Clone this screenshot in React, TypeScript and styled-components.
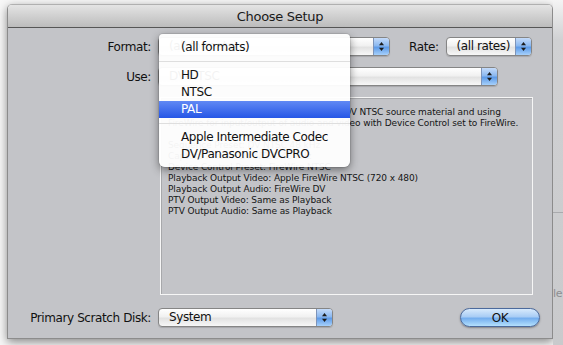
import { createGlobalStyle, styled } from "styled-components";

const GlobalStyle = createGlobalStyle`
  html, body {
    margin: 0;
    padding: 0;
    background: #f7f7f7;
  }
  body {
    font-family: "DejaVu Sans", "Liberation Sans", sans-serif;
    font-size: 12px;
    letter-spacing: -0.4px;
    color: #111;
  }
`;

const Page = styled.div`
  display: flex;
  width: 563px;
  height: 345px;
  padding: 4px 0 0 7px;
  box-sizing: border-box;
  overflow: hidden;
`;

const Window = styled.div`
  width: 546px;
  height: 335px;
  flex-shrink: 0;
  display: flex;
  flex-direction: column;
  border: 1px solid #8c8c8c;
  border-top-color: #b0b0b0;
  border-radius: 5px 5px 0 0;
  box-shadow: 0 3px 10px rgba(0, 0, 0, 0.45);
  box-sizing: border-box;
  overflow: hidden;
`;

const TitleBar = styled.div`
  height: 22px;
  flex-shrink: 0;
  display: flex;
  align-items: center;
  justify-content: center;
  background: linear-gradient(#e4e4e4, #bcbcbc);
  border-bottom: 1px solid #565656;
  font-size: 13px;
  letter-spacing: -0.3px;
  color: #1a1a1a;
`;

const Body = styled.div`
  flex: 1;
  display: flex;
  flex-direction: column;
  padding: 9px 0 0 0;
  background: #c3c4c8;
`;

const Row = styled.div<{ $top?: number }>`
  display: flex;
  align-items: center;
  margin-top: ${(p) => p.$top ?? 0}px;
`;

const FieldLabel = styled.div<{ $width?: number; $gap?: number }>`
  width: ${(p) => (p.$width ? `${p.$width}px` : "auto")};
  margin-left: ${(p) => p.$gap ?? 0}px;
  margin-right: 7px;
  text-align: right;
  white-space: nowrap;
  color: #111;
  flex-shrink: 0;
`;

const PopupWrap = styled.div`
  position: relative;
`;

const Popup = styled.div<{ $width: number }>`
  width: ${(p) => p.$width}px;
  height: 19px;
  flex-shrink: 0;
  display: flex;
  align-items: stretch;
  box-sizing: border-box;
  border: 1px solid #858585;
  border-radius: 4px;
  background: linear-gradient(#ffffff 0%, #f1f1f1 45%, #e2e2e2 55%, #f7f7f7 100%);
  box-shadow: 0 1px 1px rgba(0, 0, 0, 0.15);
  overflow: hidden;
`;

const PopupValue = styled.span`
  flex: 1;
  padding-left: 10px;
  line-height: 17px;
  white-space: nowrap;
`;

const PopupArrows = styled.span`
  width: 15px;
  display: flex;
  align-items: center;
  justify-content: center;
  border-left: 1px solid #7d93b8;
  background: linear-gradient(#c4dbfa 0%, #8bb8f0 45%, #5e9be8 55%, #a6d0fb 100%);
`;

const Arrows = () => (
  <svg width="7" height="11" viewBox="0 0 7 11">
    <path d="M3.5 1 L6 4.2 H1 Z" fill="#1b1b1b" />
    <path d="M3.5 10 L6 6.8 H1 Z" fill="#1b1b1b" />
  </svg>
);

const Menu = styled.div`
  position: absolute;
  top: -3px;
  left: 1px;
  width: 191px;
  padding: 5px 0 4px;
  background: rgba(255, 255, 255, 0.95);
  border-radius: 4px 4px 6px 6px;
  box-shadow: 0 3px 9px rgba(0, 0, 0, 0.45), 0 0 0 1px rgba(0, 0, 0, 0.08);
  z-index: 5;
`;

const MenuItem = styled.div<{ $active?: boolean }>`
  height: 17px;
  line-height: 17px;
  padding-left: 22px;
  color: ${(p) => (p.$active ? "#fff" : "#111")};
  background: ${(p) => (p.$active ? "linear-gradient(#6189f4, #2556e6)" : "transparent")};
  white-space: nowrap;
`;

const MenuSeparator = styled.div`
  height: 11px;
  display: flex;
  align-items: center;
  &::after {
    content: "";
    flex: 1;
    height: 1px;
    background: #dedede;
  }
`;

const DescBox = styled.div`
  margin: 11px 0 0 152px;
  width: 373px;
  height: 198px;
  box-sizing: border-box;
  padding: 9px 0 0 7px;
  border: 1px solid #f6f6f6;
  box-shadow: inset 1px 1px 0 #a7a8ab;
  font-size: 9px;
  line-height: 11px;
  letter-spacing: -0.1px;
  color: #151515;
  white-space: nowrap;
  overflow: hidden;
`;

const OkButton = styled.div`
  margin-left: auto;
  margin-right: 12px;
  width: 80px;
  height: 19px;
  display: flex;
  align-items: center;
  justify-content: center;
  box-sizing: border-box;
  border: 1px solid #4c6a9c;
  border-radius: 10px;
  background: linear-gradient(#d8eafc 0%, #a9cdf5 45%, #74aeee 55%, #b4e0fd 100%);
  box-shadow: 0 1px 2px rgba(0, 0, 0, 0.35);
  color: #111;
`;

const Backdrop = styled.div`
  flex: 1;
  margin-top: -4px;
  display: flex;
  flex-direction: column;
  background: linear-gradient(#f4f4f4 0px, #d0d1d3 40px, #c9cacc 100%);
`;

const BackdropRule = styled.div`
  margin-top: 212px;
  height: 1px;
  background: #a9aaad;
`;

const BackdropText = styled.div`
  margin-top: 74px;
  font-size: 11px;
  color: #8d8e91;
`;

const descLines = [
  "Use this Easy Setup when working with DV NTSC source material and using",
  "FireWire for input/output of audio and video with Device Control set to FireWire.",
  "\u00a0",
  "Sequence Preset: DV NTSC 48 kHz",
  "Capture Preset: DV NTSC 48 kHz",
  "Device Control Preset: FireWire NTSC",
  "Playback Output Video: Apple FireWire NTSC (720 x 480)",
  "Playback Output Audio: FireWire DV",
  "PTV Output Video: Same as Playback",
  "PTV Output Audio: Same as Playback",
];

export default function App() {
  return (
    <>
      <GlobalStyle />
      <Page>
        <Window>
          <TitleBar>Choose Setup</TitleBar>
          <Body>
            <Row>
              <FieldLabel $width={143}>Format:</FieldLabel>
              <PopupWrap>
                <Popup $width={232}>
                  <PopupValue>(all formats)</PopupValue>
                  <PopupArrows>
                    <Arrows />
                  </PopupArrows>
                </Popup>
                <Menu>
                  <MenuItem>(all formats)</MenuItem>
                  <MenuSeparator />
                  <MenuItem>HD</MenuItem>
                  <MenuItem>NTSC</MenuItem>
                  <MenuItem $active>PAL</MenuItem>
                  <MenuSeparator />
                  <MenuItem>Apple Intermediate Codec</MenuItem>
                  <MenuItem>DV/Panasonic DVCPRO</MenuItem>
                </Menu>
              </PopupWrap>
              <FieldLabel $gap={19}>Rate:</FieldLabel>
              <Popup $width={86}>
                <PopupValue>(all rates)</PopupValue>
                <PopupArrows>
                  <Arrows />
                </PopupArrows>
              </Popup>
            </Row>
            <Row $top={11}>
              <FieldLabel $width={143}>Use:</FieldLabel>
              <Popup $width={340}>
                <PopupValue>DV-NTSC</PopupValue>
                <PopupArrows>
                  <Arrows />
                </PopupArrows>
              </Popup>
            </Row>
            <DescBox>
              {descLines.map((line, i) => (
                <div key={i}>{line}</div>
              ))}
            </DescBox>
            <Row $top={13}>
              <FieldLabel $width={143}>Primary Scratch Disk:</FieldLabel>
              <Popup $width={175}>
                <PopupValue>System</PopupValue>
                <PopupArrows>
                  <Arrows />
                </PopupArrows>
              </Popup>
              <OkButton>OK</OkButton>
            </Row>
          </Body>
        </Window>
        <Backdrop>
          <BackdropRule />
          <BackdropText>le</BackdropText>
        </Backdrop>
      </Page>
    </>
  );
}
